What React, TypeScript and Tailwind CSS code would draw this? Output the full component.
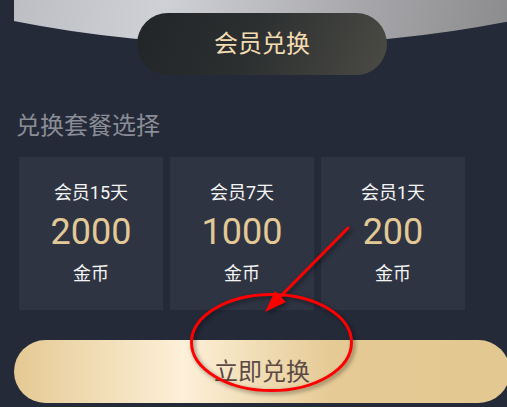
const plans = [
  { label: "会员15天", coins: 2000 },
  { label: "会员7天", coins: 1000 },
  { label: "会员1天", coins: 200 },
];

const Annotation = () => (
  <svg
    className="absolute inset-0 pointer-events-none [filter:drop-shadow(2px_2px_2px_rgba(0,0,0,0.45))]"
    width="507"
    height="407"
    viewBox="0 0 507 407"
  >
    <line x1="348" y1="228" x2="276" y2="301" stroke="#ff0000" strokeWidth="3" strokeLinecap="round" />
    <polygon points="265,312 286,302 275,291" fill="#ff0000" />
    <ellipse cx="271.5" cy="342.5" rx="80" ry="48" fill="none" stroke="#ff0000" strokeWidth="3" />
  </svg>
);

export default function App() {
  return (
    <div className="relative w-[507px] h-[407px] overflow-hidden bg-[#252a39] font-['Roboto','Noto_Sans_CJK_SC',sans-serif]">
      <div className="w-[524px] flex flex-col">
        {/* Header */}
        <div className="mx-[14px] h-[45px] bg-[linear-gradient(100deg,#bdbec3_0%,#d0d1d6_30%,#a8a8ac_68%,#8b8b8d_100%)] [clip-path:circle(1300px_at_50%_-1255px)]" />
        <div className="relative z-10 -mt-[32px] mx-auto w-[250px] h-[62px] rounded-full bg-[linear-gradient(110deg,#212527_0%,#2c2f30_45%,#4b4b45_100%)] flex items-center justify-center">
          <span className="text-[24px] leading-[32px] text-[#f3dcb2]">会员兑换</span>
        </div>

        {/* Plans */}
        <h2 className="mt-[35px] pl-[16px] text-[24px] leading-[32px] text-[#8a8d96]">兑换套餐选择</h2>
        <div className="mt-[15px] pl-[19px] flex gap-[7px]">
          {plans.map((p) => (
            <div
              key={p.label}
              className="w-[144px] h-[153px] bg-[#2f3443] flex flex-col items-center justify-center"
            >
              <span className="text-[18px] leading-[24px] text-[#f4f4f4]">{p.label}</span>
              <span className="mt-[5px] text-[36px] leading-[44px] text-[#e2c995]">{p.coins}</span>
              <span className="mt-[8px] text-[18px] leading-[24px] text-[#f4f4f4]">金币</span>
            </div>
          ))}
        </div>

        {/* Action */}
        <button className="mt-[30px] mx-[14px] h-[63px] rounded-full bg-[linear-gradient(90deg,#e4c993_0%,#f3e0bb_20%,#fdf0d9_34%,#f0dcb3_50%,#e5ca95_64%,#e3c891_100%)] flex items-center justify-center">
          <span className="text-[24px] leading-[32px] text-[#5d4a44]">立即兑换</span>
        </button>
      </div>
      <Annotation />
    </div>
  );
}
